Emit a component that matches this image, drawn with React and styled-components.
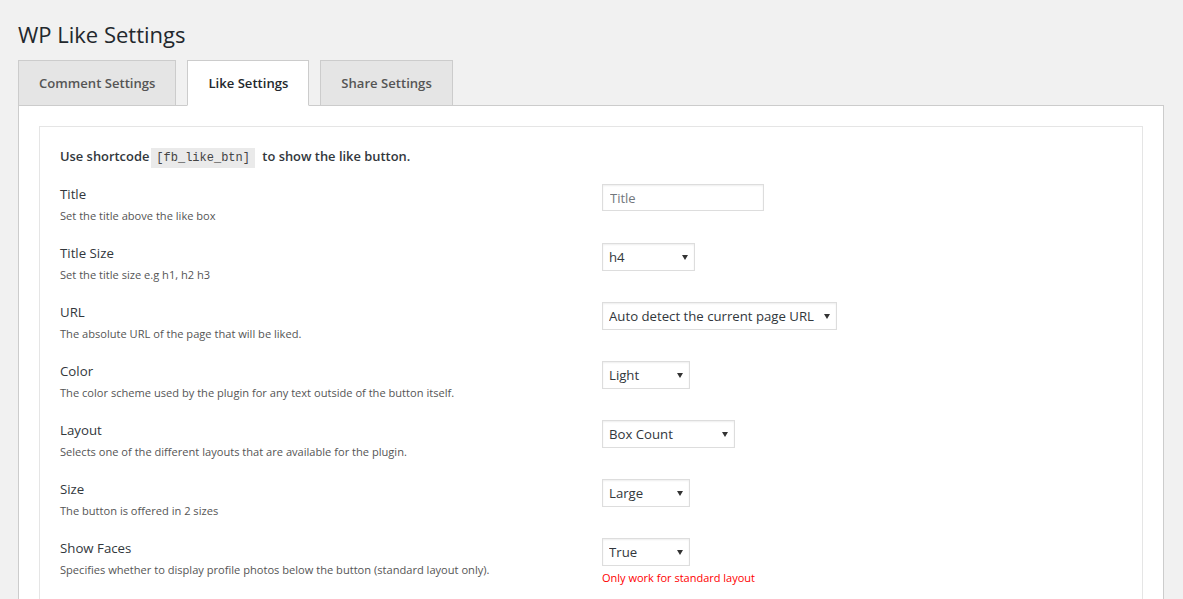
import React from "react";
import styled, { createGlobalStyle } from "styled-components";

const Global = createGlobalStyle`
  html, body { margin: 0; padding: 0; background: #f1f1f1; }
  body { font-family: "Open Sans", "Noto Sans", sans-serif; color: #444; }
  * { box-sizing: border-box; }
`;

const Wrap = styled.div`
  height: 100vh;
  overflow: hidden;
  padding: 19px 19px 0 18px;
`;

const Heading = styled.h1`
  margin: 0 0 11px 0;
  font-size: 22px;
  line-height: 30px;
  font-weight: 400;
  color: #23282d;
`;

const TabBar = styled.div`
  display: flex;
  gap: 11px;
  align-items: flex-end;
`;

const Tab = styled.div`
  height: ${(p) => (p.$active ? 46 : 45)}px;
  margin-bottom: ${(p) => (p.$active ? -1 : 0)}px;
  padding: 0 20px;
  display: flex;
  align-items: center;
  border: 1px solid #ccc;
  border-bottom: ${(p) => (p.$active ? "1px solid #fff" : "none")};
  background: ${(p) => (p.$active ? "#fff" : "#e5e5e5")};
  color: ${(p) => (p.$active ? "#23282d" : "#555")};
  font-size: 13.1px;
  font-weight: 600;
  position: relative;
  z-index: 1;
`;

const Panel = styled.div`
  background: #fff;
  border: 1px solid #ccc;
  padding: 20px;
  width: 1146px;
  height: 520px;
`;

const Box = styled.div`
  border: 1px solid #e5e5e5;
  padding: 19px 20px 20px 20px;
  height: 100%;
`;

const Intro = styled.p`
  margin: 0 0 18px 0;
  height: 20px;
  font-size: 12.9px;
  line-height: 20px;
  font-weight: 600;
  color: #32373c;
`;

const Code = styled.code`
  font-family: "Liberation Mono", "DejaVu Sans Mono", monospace;
  font-size: 12px;
  line-height: 12px;
  font-weight: 400;
  background: #eaeaea;
  color: #444;
  padding: 3px 5px;
  margin: 0 4px 0 2px;
`;

const Row = styled.div`
  display: grid;
  grid-template-columns: 542px 1fr;
  height: 59px;
`;

const Label = styled.div`
  font-size: 13.25px;
  line-height: 20px;
  color: #32373c;
`;

const Desc = styled.div`
  margin-top: 3px;
  font-size: 11.1px;
  line-height: 18px;
  color: #555;
`;

const TextInput = styled.input`
  width: 162px;
  height: 27px;
  border: 1px solid #ddd;
  box-shadow: inset 0 1px 2px rgba(0, 0, 0, 0.07);
  padding: 0 7px;
  font-family: inherit;
  font-size: 13px;
  color: #32373c;
  outline: none;
  display: block;
  &::placeholder { color: #72777c; }
`;

const SelectWrap = styled.div`
  position: relative;
  width: ${(p) => p.$w}px;
  &::after {
    content: "";
    position: absolute;
    right: 7px;
    top: 12px;
    border-left: 3.5px solid transparent;
    border-right: 3.5px solid transparent;
    border-top: 5px solid #333;
    pointer-events: none;
  }
`;

const Select = styled.select`
  appearance: none;
  -webkit-appearance: none;
  width: 100%;
  height: 28px;
  border: 1px solid #ddd;
  box-shadow: inset 0 1px 2px rgba(0, 0, 0, 0.07);
  background: #fff;
  padding: 0 16px 0 6px;
  font-family: inherit;
  font-size: 13.2px;
  color: #32373c;
  outline: none;
  display: block;
`;

const Note = styled.div`
  margin-top: 4px;
  font-size: 11px;
  line-height: 16px;
  color: #f00;
`;

const rows = [
  { label: "Title", desc: "Set the title above the like box", input: true },
  { label: "Title Size", desc: "Set the title size e.g h1, h2 h3", value: "h4", w: 93 },
  { label: "URL", desc: "The absolute URL of the page that will be liked.", value: "Auto detect the current page URL", w: 235 },
  { label: "Color", desc: "The color scheme used by the plugin for any text outside of the button itself.", value: "Light", w: 88 },
  { label: "Layout", desc: "Selects one of the different layouts that are available for the plugin.", value: "Box Count", w: 133 },
  { label: "Size", desc: "The button is offered in 2 sizes", value: "Large", w: 88 },
  { label: "Show Faces", desc: "Specifies whether to display profile photos below the button (standard layout only).", value: "True", w: 88, note: "Only work for standard layout" },
];

export default function App() {
  return (
    <>
      <Global />
      <Wrap>
        <Heading>WP Like Settings</Heading>
        <TabBar>
          <Tab>Comment Settings</Tab>
          <Tab $active>Like Settings</Tab>
          <Tab>Share Settings</Tab>
        </TabBar>
        <Panel>
          <Box>
            <Intro>
              Use shortcode<Code>[fb_like_btn]</Code> to show the like button.
            </Intro>
            {rows.map((r) => (
              <Row key={r.label}>
                <div>
                  <Label>{r.label}</Label>
                  <Desc>{r.desc}</Desc>
                </div>
                <div>
                  {r.input ? (
                    <TextInput placeholder="Title" />
                  ) : (
                    <SelectWrap $w={r.w}>
                      <Select defaultValue={r.value}>
                        <option>{r.value}</option>
                      </Select>
                    </SelectWrap>
                  )}
                  {r.note && <Note>{r.note}</Note>}
                </div>
              </Row>
            ))}
          </Box>
        </Panel>
      </Wrap>
    </>
  );
}
